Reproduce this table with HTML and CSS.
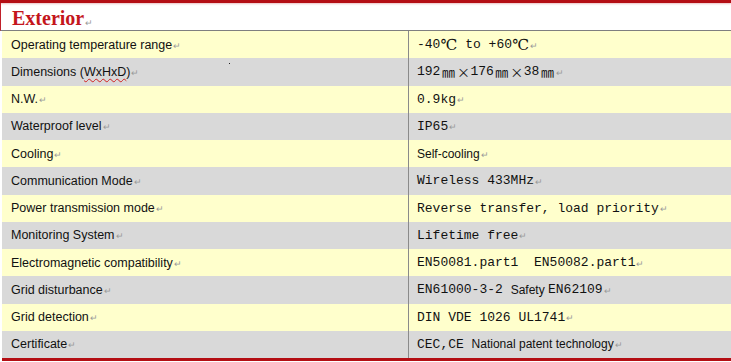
FILE: index.html
```html
<!DOCTYPE html>
<html>
<head>
<meta charset="utf-8">
<link rel="stylesheet" href="styles.css">
</head>
<body>
<div class="bar"></div>
<div class="title">Exterior<span class="mk">↵</span></div>
<div class="table">
  <div class="row y"><div class="k">Operating temperature range<span class="mk">↵</span></div><div class="v"><span class="m">-40</span><span class="deg">℃</span><span class="m"> to +60</span><span class="deg">℃</span><span class="mk">↵</span></div></div>
  <div class="row g"><div class="k">Dimensions (<span class="sp">WxHxD</span>)<span class="mk">↵</span><span class="dot"></span></div><div class="v"><span class="m">192</span><span class="cj">㎜</span><span class="cj x">×</span><span class="m">176</span><span class="cj">㎜</span><span class="cj x">×</span><span class="m">38</span><span class="cj">㎜</span><span class="mk">↵</span></div></div>
  <div class="row y"><div class="k">N.W.<span class="mk">↵</span></div><div class="v"><span class="m">0.9kg</span><span class="mk">↵</span></div></div>
  <div class="row g"><div class="k">Waterproof level<span class="mk">↵</span></div><div class="v"><span class="m">IP65</span><span class="mk">↵</span></div></div>
  <div class="row y"><div class="k">Cooling<span class="mk">↵</span></div><div class="v">Self-cooling<span class="mk">↵</span></div></div>
  <div class="row g"><div class="k">Communication Mode<span class="mk">↵</span></div><div class="v"><span class="m">Wireless 433MHz</span><span class="mk">↵</span></div></div>
  <div class="row y"><div class="k">Power transmission mode<span class="mk">↵</span></div><div class="v"><span class="m">Reverse transfer, load priority</span><span class="mk">↵</span></div></div>
  <div class="row g"><div class="k">Monitoring System<span class="mk">↵</span></div><div class="v"><span class="m">Lifetime free</span><span class="mk">↵</span></div></div>
  <div class="row y"><div class="k">Electromagnetic compatibility<span class="mk">↵</span></div><div class="v"><span class="m">EN50081.part1  EN50082.part1</span><span class="mk">↵</span></div></div>
  <div class="row g"><div class="k">Grid disturbance<span class="mk">↵</span></div><div class="v"><span class="m">EN61000-3-2 </span>Safety <span class="m">EN62109</span><span class="mk">↵</span></div></div>
  <div class="row y"><div class="k">Grid detection<span class="mk">↵</span></div><div class="v"><span class="m">DIN VDE 1026 UL1741</span><span class="mk">↵</span></div></div>
  <div class="row g"><div class="k">Certificate<span class="mk">↵</span></div><div class="v"><span class="m">CEC,CE </span>National patent technology<span class="mk">↵</span></div></div>
</div>
<div class="bar bottom"></div>
</body>
</html>
```
FILE: styles.css
```css
html, body {
  margin: 0;
  padding: 0;
  background: #ffffff;
}
body {
  width: 731px;
  height: 362px;
  overflow: hidden;
  font-family: "Liberation Sans", Arial, sans-serif;
  font-size: 12.5px;
  color: #111;
}
.bar {
  height: 3px;
  background: #b40e14;
  box-shadow: 0 1px 2px rgba(180, 14, 20, 0.25);
}
.bar.bottom {
  margin-left: 2px;
  box-shadow: none;
}
.title {
  height: 28px;
  box-sizing: border-box;
  padding: 4px 0 0 11px;
  border-left: 1px solid #c0202a;
  font-family: "Liberation Serif", "Times New Roman", serif;
  font-weight: bold;
  font-size: 20px;
  line-height: 22px;
  color: #c4161c;
  border-bottom: 1px solid #7f7f7f;
}
.title .mk {
  font-family: "Liberation Sans", sans-serif;
  font-weight: normal;
}
.table {
  margin-left: 2px;
}
.row {
  display: grid;
  grid-template-columns: 406px 1fr;
  height: 27.25px;
}
.row.y { background: #ffffcc; }
.row.g { background: #d9d9d9; }
.k {
  display: flex;
  align-items: center;
  padding-left: 9px;
  white-space: pre;
  position: relative;
}
.v {
  display: flex;
  align-items: center;
  padding-left: 8px;
  border-left: 1px solid #8a8a8a;
  white-space: pre;
  font-size: 12px;
}
.m {
  font-family: "Liberation Mono", "Courier New", monospace;
  font-size: 13px;
}
.cj {
  display: inline-block;
  width: 16px;
  text-align: center;
  font-family: "Noto Sans CJK SC", sans-serif;
  font-size: 13px;
  font-weight: 400;
}
.cj.x {
  width: 14px;
}
.deg {
  display: inline-block;
  width: 17px;
  text-align: center;
  font-family: "DejaVu Serif", "Noto Sans CJK SC", serif;
  font-size: 15px;
  line-height: 16px;
}
.mk {
  font-family: "Liberation Sans", sans-serif;
  font-size: 9px;
  color: #9a9a9a;
  margin-left: 1px;
  position: relative;
  top: 1px;
}
.sp {
  text-decoration: underline wavy #d02020;
  text-decoration-thickness: 1px;
  text-underline-offset: 2px;
}
.dot {
  position: absolute;
  left: 227px;
  top: 5px;
  width: 1px;
  height: 1px;
  background: #222;
}
```
